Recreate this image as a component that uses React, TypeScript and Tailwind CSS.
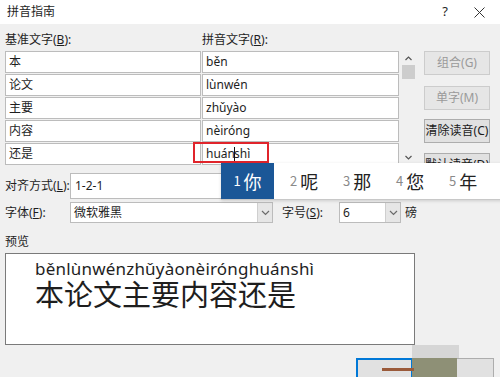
import React from "react";

const rows = [
  ["本", "běn"],
  ["论文", "lùnwén"],
  ["主要", "zhǔyào"],
  ["内容", "nèiróng"],
  ["还是", "huánshì"],
];

const candidates = [
  ["2", "呢"],
  ["3", "那"],
  ["4", "您"],
  ["5", "年"],
  ["6", ""],
];

const Chevron = () => (
  <svg width="9" height="6" viewBox="0 0 9 6">
    <path d="M1 1 L4.5 4.5 L8 1" fill="none" stroke="#6b6b6b" strokeWidth="1.2" />
  </svg>
);

const SideButton = ({ label, disabled, className }: { label: React.ReactNode; disabled?: boolean; className?: string }) => (
  <div
    className={`h-[24px] w-[66px] shrink-0 flex items-center justify-center text-[12px] border ${
      disabled ? "bg-[#e6e6e6] border-[#cccccc] text-[#9a9a9a]" : "bg-[#e1e1e1] border-[#adadad] text-[#1a1a1a]"
    } ${className ?? ""}`}
  >
    {label}
  </div>
);

export default function App() {
  return (
    <div className="w-[500px] h-[377px] overflow-hidden relative bg-[#f0f0f0] text-[#1e1e1e] font-['Noto_Sans','Noto_Sans_CJK_SC',sans-serif]">
      {/* title bar */}
      <div className="h-[24px] bg-white flex items-center text-[12px]">
        <span className="pl-[7px]">拼音指南</span>
        <span className="ml-auto w-[20px] text-center text-[13px]">?</span>
        <span className="ml-[17px] mr-[14px] w-[14px] flex justify-center">
          <svg width="11" height="11" viewBox="0 0 11 11">
            <path d="M0.5 0.5 L10.5 10.5 M10.5 0.5 L0.5 10.5" stroke="#333" strokeWidth="1" />
          </svg>
        </span>
      </div>

      {/* column labels */}
      <div className="h-[27px] flex items-center pt-[5px] text-[12px]">
        <span className="pl-[5px] w-[202px]">
          基准文字(<u>B</u>):
        </span>
        <span>
          拼音文字(<u>R</u>):
        </span>
      </div>

      {/* table + scroll + buttons */}
      <div className="flex pl-[5px] h-[114px] items-start">
        <div className="flex flex-col gap-[1px]">
          {rows.map(([base, py], i) => (
            <div key={i} className="flex gap-[1px] text-[12px]">
              <div className="w-[196px] h-[22px] bg-white border border-[#bcbcbc] flex items-center pl-[3px]">{base}</div>
              <div className="w-[197px] h-[22px] bg-white border border-[#bcbcbc] flex items-center pl-[3px]">
                {i === 4 ? (
                  <>
                    huán
                    <span className="inline-block w-[1px] h-[14px] bg-[#111] -mx-[1px]" />
                    shì
                  </>
                ) : (
                  py
                )}
              </div>
            </div>
          ))}
        </div>
        <div className="ml-[2px] w-[15px] h-[114px] flex flex-col items-center">
          <svg className="mt-[5px]" width="7" height="5" viewBox="0 0 7 5">
            <path d="M0.5 4 L3.5 1 L6.5 4" fill="none" stroke="#555" strokeWidth="1.2" />
          </svg>
          <div className="mt-[4px] w-[13px] h-[14px] bg-[#cdcdcd]" />
          <svg className="mt-auto mb-[5px]" width="7" height="5" viewBox="0 0 7 5">
            <path d="M0.5 1 L3.5 4 L6.5 1" fill="none" stroke="#555" strokeWidth="1.2" />
          </svg>
        </div>
        <div className="ml-[8px] flex flex-col h-[114px] overflow-visible">
          <SideButton label="组合(G)" disabled />
          <SideButton label="单字(M)" disabled className="mt-[11px]" />
          <SideButton label="清除读音(C)" className="mt-[9px] text-[11px]" />
          <SideButton label="默认读音(D)" className="mt-[10px] text-[11px]" />
        </div>
      </div>

      {/* alignment row */}
      <div className="flex items-center pl-[5px] mt-[8px] text-[12px]">
        <span className="w-[65px]">
          对齐方式(<u>L</u>):
        </span>
        <div className="w-[330px] h-[26px] bg-white border border-[#bcbcbc] flex items-center pl-[4px]">1-2-1</div>
      </div>

      {/* font row */}
      <div className="flex items-center pl-[5px] mt-[3px] text-[12px]">
        <span className="w-[65px]">
          字体(<u>F</u>):
        </span>
        <div className="w-[203px] h-[21px] bg-white border border-[#bcbcbc] flex items-center">
          <span className="pl-[3px] flex-1">微软雅黑</span>
          <div className="w-[15px] h-full bg-[#e6e6e6] border-l border-[#cfcfcf] flex items-center justify-center">
            <Chevron />
          </div>
        </div>
        <span className="ml-[9px] w-[57px]">
          字号(<u>S</u>):
        </span>
        <div className="w-[62px] h-[21px] bg-white border border-[#bcbcbc] flex items-center">
          <span className="pl-[3px] flex-1">6</span>
          <div className="w-[15px] h-full bg-[#e6e6e6] border-l border-[#cfcfcf] flex items-center justify-center">
            <Chevron />
          </div>
        </div>
        <span className="ml-[4px]">磅</span>
      </div>

      {/* preview */}
      <div className="h-[30px] flex items-center pt-[8px] pl-[5px] text-[12px]">预览</div>
      <div className="ml-[5px] w-[410px] h-[92px] bg-white border border-[#7a7a7a] flex flex-col pl-[29px] pt-[5px]">
        <div className="text-[17px] leading-[20px] tracking-[0.2px]">běnlùnwénzhǔyàonèirónghuánshì</div>
        <div className="text-[29px] leading-[34px] -mt-[3px] font-['Noto_Sans_CJK_SC',sans-serif]">本论文主要内容还是</div>
      </div>

      {/* bottom buttons */}
      <div className="flex mt-[13px] pl-[356px]">
        <div className="w-[57px] h-[24px] bg-[#e1e1e1] border-2 border-[#0078d7]" />
        <div className="w-[81px] h-[24px] bg-[#e1e1e1] border border-[#adadad]" />
      </div>

      {/* recording artifact over the buttons */}
      <div className="absolute left-[412px] top-[345px] w-[47px] h-[13px] bg-[#d6d6d6]" />
      <div className="absolute left-[412px] top-[358px] w-[45px] h-[19px] bg-[#8e9076]" />
      <div className="absolute left-[382px] top-[368px] w-[32px] h-[3px] bg-[#9a5a3a]" />

      {/* red highlight */}
      <div className="absolute left-[193px] top-[142px] w-[76px] h-[21px] border-2 border-[#e0242b]" />

      {/* IME candidate bar */}
      <div className="absolute left-[221px] top-[163px] w-[290px] h-[37px] bg-white border-b border-[#c8c8c8] shadow-[0_1px_3px_rgba(0,0,0,0.15)] flex items-center font-['Noto_Sans_CJK_SC',sans-serif]">
        <div className="w-[53px] shrink-0 h-full bg-[#1b5797] text-white flex items-center justify-center gap-[3px]">
          <span className="text-[13px]">1</span>
          <span className="text-[18px]">你</span>
        </div>
        {candidates.map(([n, c]) => (
          <div key={n} className="w-[53px] shrink-0 flex items-center pl-[16px] gap-[3px]">
            <span className="text-[13px] text-[#8a8a8a]">{n}</span>
            <span className="text-[18px] text-[#222]">{c}</span>
          </div>
        ))}
      </div>
    </div>
  );
}
